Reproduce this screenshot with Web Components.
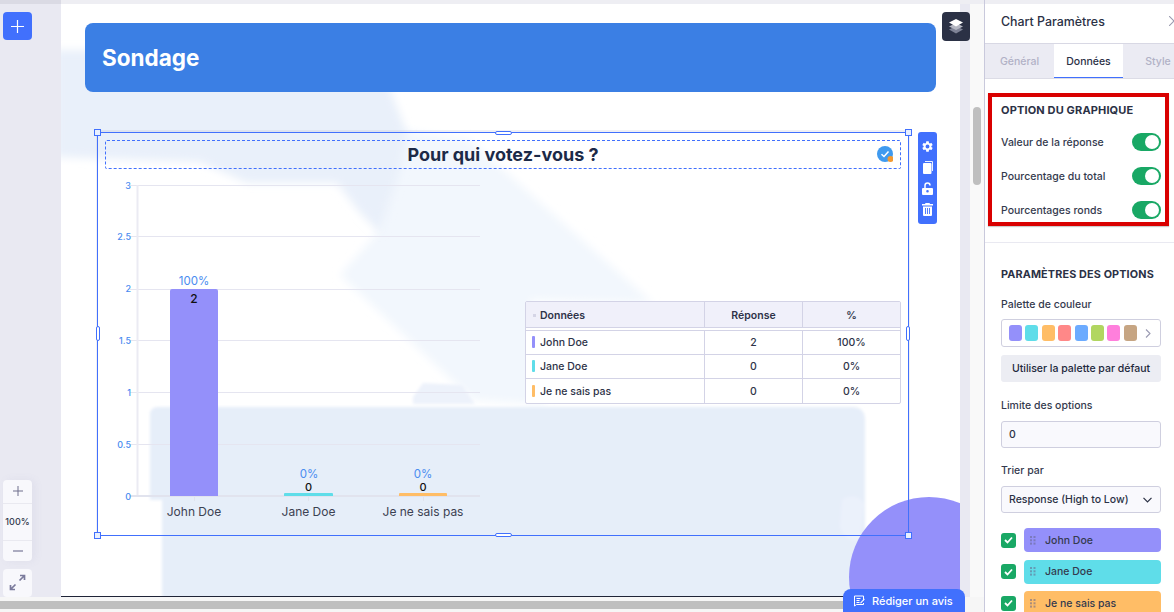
<!DOCTYPE html>
<html lang="fr">
<head>
<meta charset="utf-8">
<title>Sondage</title>
<style>
  html, body { margin: 0; padding: 0; width: 1174px; height: 612px; overflow: hidden; background: #fff; }
  body { font-family: "Inter", "Liberation Sans", sans-serif; color: #2d3348; }
</style>
</head>
<body>
<builder-app></builder-app>
<script>
const FONT = '"Inter", "Liberation Sans", sans-serif';
function define(name, html) {
  customElements.define(name, class extends HTMLElement {
    constructor() {
      super();
      const root = this.attachShadow({ mode: 'open' });
      if (typeof html !== 'function') {
        const tpl = document.createElement('template');
        tpl.innerHTML = html;
        root.appendChild(tpl.content.cloneNode(true));
      }
    }
    connectedCallback() {
      if (typeof html === 'function') {
        this.shadowRoot.innerHTML = html(this);
      }
    }
  });
}

define('tool-rail', `
<style>
  :host { display: flex; flex-direction: column; width: 61px; height: 597px; background: #e9e9f2; box-sizing: border-box; padding: 12px 0 0 3px; position: relative; flex: none; }
  .strip { position: absolute; left: 0; top: 0; right: 0; height: 4px; background: #dadae4; }
  .add { width: 29px; height: 29px; border-radius: 4px; background: #4170fd; display: flex; align-items: center; justify-content: center; }
  .zoom { margin-top: 439.500px; width: 29px; height: 83px; border-radius: 4px; background: #f8f8fc; display: flex; flex-direction: column; box-shadow: 3px 0 8px rgba(120,120,160,.08); }
  .zoom > div { display: flex; align-items: center; justify-content: center; }
  .z1 { height: 23px; border-bottom: 1px solid #e9e9f0; }
  .z2 { height: 36px; border-bottom: 1px solid #e9e9f0; font: 500 9px ${FONT}; color: #343a4e; }
  .z3 { flex: 1; }
  .expand { margin-top: 8px; width: 29px; height: 29px; border-radius: 4px; background: #f8f8fc; display: flex; align-items: center; justify-content: center; }
</style>
<div class="strip"></div>
<div class="add"><svg width="13" height="13" viewBox="0 0 13 13"><path d="M6.500 0v13M0 6.500h13" stroke="#fff" stroke-width="1.200"/></svg></div>
<div class="zoom">
  <div class="z1"><svg width="10" height="10" viewBox="0 0 10 10"><path d="M5 0v10M0 5h10" stroke="#6f6f8c" stroke-width="1"/></svg></div>
  <div class="z2">100%</div>
  <div class="z3"><svg width="10" height="2" viewBox="0 0 10 2"><path d="M0 1h10" stroke="#8a8aa6" stroke-width="1.400"/></svg></div>
</div>
<div class="expand"><svg width="17" height="17" viewBox="0 0 17 17" fill="none" stroke="#7a7a9c" stroke-width="1.700"><path d="M15.500 1.500 10.500 6.500M11 1.500h4.500V6M1.500 15.500l5-5M1.500 11v4.500H6"/></svg></div>
`);

define('page-backdrop', `
<style>
  :host { position: absolute; inset: 0; display: block; pointer-events: none; }
  svg { display: block; position: absolute; left: 0; top: 0; }
</style>
<svg width="899" height="593" viewBox="61 4 899 593">
  <defs>
    <filter id="b" x="-5%" y="-5%" width="110%" height="110%"><feGaussianBlur stdDeviation="1.600"/></filter>
    <filter id="s" x="-5%" y="-5%" width="110%" height="110%"><feGaussianBlur stdDeviation="4"/></filter>
  </defs>
  <polygon filter="url(#s)" fill="#f2f7fd" points="340,275 377,233 400,130 470,140 653,303 530,300 545,405 473,400"/>
  <polygon filter="url(#s)" fill="#e9f0fa" points="55,50 375,50 407,133 400,170 380,233 360,213 337,183 247,183 200,162 55,157"/>
  <g filter="url(#b)">
    <polygon fill="#edf2fb" points="413,397 423,383 462,385 475,404 413,404"/>
    <path fill="#e6eef9" d="M158 407H852Q865 407 865 420V530L850 540V600H162V500H150V415Q150 407 158 407Z"/>
    <path fill="#e6eef9" d="M840 530H960V600H840Z"/>
    <path fill="#fff" d="M868 476H960V530H868Z"/>
    <path fill="#eef3fb" d="M842 500c8 -6 18 -4 22 4l-4 36c-10 2-18-4-20-14z" opacity=".6"/>
  </g>
  <circle cx="929" cy="577" r="80" fill="#9490fa"/>
</svg>
`);

define('form-header', `
<style>
  :host { display: flex; align-items: center; box-sizing: border-box; margin-left: 24px; width: 851px; height: 69px; padding: 0 0 0 17px; background: #3b7fe4; border-radius: 8px; color: #fff; font: 700 22.500px ${FONT}; position: relative; }
</style>
<slot></slot>
`);

define('chart-plot', `
<style>
  :host { display: block; width: 427px; height: 365px; flex: none; align-self: flex-start; }
  svg { display: block; }
  text { font-family: ${FONT}; }
  .tick { font-size: 9px; fill: #4a8cf0; text-anchor: end; font-weight: 500; }
  .pct { font-size: 11.500px; fill: #4a8cf0; text-anchor: middle; }
  .val { font-size: 11px; fill: #111; text-anchor: middle; font-weight: 500; }
  .cat { font-size: 12px; fill: #3c4152; text-anchor: middle; }
  .grid { stroke: #e5e5f0; stroke-width: 1; }
</style>
<svg width="427" height="365" viewBox="98 169 427 365">
  <path class="grid" d="M130 185.500H480M130 236.500H480M130 289.500H480M130 340.500H480M130 392.500H480M130 444.500H480"/>
  <path d="M137.500 185V496" stroke="#ebebf3" stroke-width="2"/>
  <path d="M130 496H480" stroke="#e1e3ee" stroke-width="2"/>
  <path d="M194.500 497v4M308.500 497v4M423.500 497v4" stroke="#e1e3ee"/>
  <text class="tick" x="131" y="188.500">3</text>
  <text class="tick" x="131" y="240">2.5</text>
  <text class="tick" x="131" y="292">2</text>
  <text class="tick" x="131" y="344">1.5</text>
  <text class="tick" x="131" y="396">1</text>
  <text class="tick" x="131" y="448">0.5</text>
  <text class="tick" x="131" y="499.500">0</text>
  <path d="M170 496V291a2 2 0 0 1 2-2H216a2 2 0 0 1 2 2V496Z" fill="#9490fa"/>
  <path d="M284 496V494a1 1 0 0 1 1-1H332a1 1 0 0 1 1 1V496Z" fill="#5fdde9"/>
  <path d="M399 496V494a1 1 0 0 1 1-1H446a1 1 0 0 1 1 1V496Z" fill="#ffbd66"/>
  <text class="pct" x="194" y="285">100%</text>
  <text class="val" x="194" y="302.500" style="font-size:12px">2</text>
  <text class="pct" x="309" y="477.500">0%</text>
  <text class="val" x="308.500" y="491">0</text>
  <text class="pct" x="423" y="477.500">0%</text>
  <text class="val" x="423" y="491">0</text>
  <text class="cat" x="194" y="516">John Doe</text>
  <text class="cat" x="308.500" y="516">Jane Doe</text>
  <text class="cat" x="423" y="516">Je ne sais pas</text>
</svg>
`);

define('data-table', `
<style>
  :host { display: block; width: 376px; box-sizing: border-box; background: #fff; border: 1px solid #d3d3e6; border-radius: 2px; font: 500 10.500px ${FONT}; color: #2e3348; flex: none; margin-top: 1px; }
  .row { display: grid; grid-template-columns: 178px 98px 1fr; height: 24.500px; border-bottom: 1px solid #d3d3e6; box-sizing: border-box; }
  .row:last-child { border-bottom: 0; height: 24px; }
  .row > div { display: flex; align-items: center; justify-content: center; border-left: 1px solid #d3d3e6; }
  .row > div:first-child { justify-content: flex-start; border-left: 0; padding-left: 6px; }
  .head { height: 26px; background: #f0f0fa; font-weight: 600; margin-bottom: 2px; border-bottom: 1px solid #d3d3e6; box-shadow: 0 2px 0 #fff, 0 3px 0 #d3d3e6; }
  .head > div { padding-top: 1px; }
  .first > div { padding-top: 1px; }
  .bar { width: 3px; height: 12px; margin-right: 5px; border-radius: 1px; }
  .dot { width: 3px; height: 3px; margin: 0 4px 0 1px; background: #d5d5e6; }
</style>
<div class="row head"><div><span class="dot"></span>Données</div><div>Réponse</div><div>%</div></div>
<div class="row first"><div><span class="bar" style="background:#9490fa"></span>John Doe</div><div>2</div><div>100%</div></div>
<div class="row"><div><span class="bar" style="background:#5fdde9"></span>Jane Doe</div><div>0</div><div>0%</div></div>
<div class="row"><div><span class="bar" style="background:#ffbd66"></span>Je ne sais pas</div><div>0</div><div>0%</div></div>
`);

define('chart-widget', `
<style>
  :host { display: block; box-sizing: border-box; position: relative; margin: 40px 0 0 36px; width: 812px; height: 404px; border: 1px solid #4170fd; box-shadow: 0 -1px 0 1px rgba(150,150,175,.14); }
  .title { display: flex; align-items: center; justify-content: center; box-sizing: border-box; margin: 7px 7px 0; height: 29px; border: 1px dashed #4170fd; border-radius: 2px; font: 700 18px ${FONT}; color: #1c2a47; position: relative; }
  .badge { position: absolute; right: 7px; top: 5px; width: 16px; height: 16px; }
  .body { display: flex; align-items: center; height: 366px; box-sizing: border-box; }
  .h { position: absolute; box-sizing: border-box; background: #e8f0ff; border: 1px solid #4170fd; }
  .c { width: 7px; height: 7px; }
  .hh { width: 17px; height: 4px; left: 397px; border-radius: 2px; background: #fff; }
  .hv { width: 4px; height: 15px; top: 193px; border-radius: 2px; background: #fff; }
  .tools { position: absolute; left: 820px; top: -1px; width: 19px; height: 92px; background: #4170fd; border-radius: 3px; display: flex; flex-direction: column; align-items: center; padding-top: 7.500px; box-sizing: border-box; gap: 8px; }
  .tools svg { display: block; width: 13px; height: 13px; }
</style>
<div class="title">Pour qui votez-vous ?
  <svg class="badge" viewBox="0 0 16 16"><circle cx="8" cy="8" r="8" fill="#3f9aef"/><path d="M4.500 8.200 7 10.500 11.500 5.500" fill="none" stroke="#fff" stroke-width="1.500"/><circle cx="13.500" cy="13" r="3" fill="#f49a31"/></svg>
</div>
<div class="body"><chart-plot></chart-plot><data-table></data-table></div>
<span class="h c" style="left:-4px;top:-4px"></span>
<span class="h c" style="right:-4px;top:-4px"></span>
<span class="h c" style="left:-4px;bottom:-4px"></span>
<span class="h c" style="right:-4px;bottom:-4px"></span>
<span class="h hh" style="top:-2px"></span>
<span class="h hh" style="bottom:-2px"></span>
<span class="h hv" style="left:-2px"></span>
<span class="h hv" style="right:-2px"></span>
<div class="tools">
  <svg viewBox="0 0 24 24"><path fill="#fff" d="M19.140 12.940c.04-.3.06-.61.06-.94 0-.32-.02-.64-.07-.94l2.030-1.580a.49.49 0 0 0 .12-.61l-1.920-3.320a.488.488 0 0 0-.59-.22l-2.390.96c-.5-.38-1.030-.7-1.620-.94l-.36-2.540a.484.484 0 0 0-.48-.41h-3.840c-.24 0-.43.17-.47.41l-.36 2.540c-.59.24-1.130.57-1.620.94l-2.390-.96c-.22-.08-.47 0-.59.22L2.740 8.870c-.12.21-.08.47.12.61l2.030 1.580c-.05.3-.09.63-.09.94s.02.64.07.94l-2.030 1.580a.49.49 0 0 0-.12.61l1.920 3.320c.12.22.37.29.59.22l2.390-.96c.5.38 1.030.7 1.620.94l.36 2.540c.05.24.24.41.48.41h3.84c.24 0 .44-.17.47-.41l.36-2.540c.59-.24 1.130-.56 1.620-.94l2.390.96c.22.08.47 0 .59-.22l1.920-3.320c.12-.22.07-.47-.12-.61l-2.010-1.580zM12 15.600A3.600 3.600 0 1 1 12 8.400a3.600 3.600 0 0 1 0 7.200z"/></svg>
  <svg viewBox="0 0 13 13"><path fill="#fff" d="M4 0h7a1 1 0 0 1 1 1v9h-1V1H4z" opacity=".9"/><rect x="2" y="2" width="8.500" height="11" rx="1" fill="#fff"/></svg>
  <svg viewBox="0 0 13 13"><path fill="none" stroke="#fff" stroke-width="1.500" d="M4 6V3.500a2.500 2.500 0 0 1 5 0"/><path fill="#fff" fill-rule="evenodd" d="M2 6h9a1 1 0 0 1 1 1v5a1 1 0 0 1-1 1H2a1 1 0 0 1-1-1V7a1 1 0 0 1 1-1zm4.500 2a1.300 1.300 0 1 0 0 2.600 1.300 1.300 0 0 0 0-2.600z"/></svg>
  <svg viewBox="0 0 13 13"><path fill="#fff" d="M4.500 0h4l.5 1h3v1.500H1V1h3zM2 3.500h9V12a1 1 0 0 1-1 1H3a1 1 0 0 1-1-1z"/><path d="M4.500 5v6M6.500 5v6M8.500 5v6" stroke="#4170fd" stroke-width=".9"/></svg>
</div>
`);

define('form-page', `
<style>
  :host { display: block; position: relative; box-sizing: border-box; width: 899px; height: 593px; margin-top: 4px; flex: none; background: #fff; overflow: hidden; border-bottom: 1px solid #1f2437; padding-top: 19px; }
  .content { position: relative; }
</style>
<page-backdrop></page-backdrop>
<div class="content">
  <form-header>Sondage</form-header>
  <chart-widget></chart-widget>
</div>
`);

define('form-stage', `
<style>
  :host { display: flex; flex-direction: column; width: 984px; height: 612px; flex: none; position: relative; }
  .main { display: flex; height: 597px; background: #eeeef3; }
  .gutter { width: 10px; margin-top: 4px; background: #e9e9f2; flex: none; }
  .track { width: 14px; margin-top: 4px; background: #f9f9f9; flex: none; padding: 103px 3px 0; box-sizing: border-box; }
  .thumb { width: 8px; height: 78px; border-radius: 4px; background: #bfbfbf; }
  .hbar { flex: 1; background: #f6f6f6; padding-top: 4px; box-sizing: border-box; }
  .hthumb { width: 960px; height: 8px; background: #bfbfbf; }
  .layers { position: absolute; left: 942px; top: 12px; width: 28px; height: 29px; border-radius: 4px; background: #2b3145; display: flex; align-items: center; justify-content: center; }
  .review { position: absolute; left: 843px; bottom: 0; width: 122px; height: 23px; box-sizing: border-box; background: #4170fd; border-radius: 8px 8px 0 0; display: flex; align-items: center; padding-left: 11px; gap: 7px; color: #fff; font: 500 11px ${FONT}; }
</style>
<div class="main">
  <tool-rail></tool-rail>
  <form-page></form-page>
  <div class="gutter"></div>
  <div class="track"><div class="thumb"></div></div>
</div>
<div class="hbar"><div class="hthumb"></div></div>
<div class="layers"><svg width="14" height="15" viewBox="0 0 14 15"><path d="M7 7 14 10.500 7 14.500 0 10.500z" fill="#7f8396"/><path d="M7 4 14 7.500 7 11 0 7.500z" fill="#b4b6c2"/><path d="M7 0 14 3.500 7 7.500 0 3.500z" fill="#fff"/></svg></div>
<div class="review"><svg width="11" height="12" viewBox="0 0 11 12" fill="none" stroke="#fff" stroke-width="1"><path d="M9.500 5.500V1H.5v10l2-1.500h7V8M2.500 3.500h4M2.500 5.500h3M2.500 7.500h3"/><path d="M6 8 10 3.500l.8.8L7 8.600z" fill="#fff" stroke="none"/></svg>Rédiger un avis</div>
`);

define('panel-heading', `
<style>
  :host { display: block; font: 700 10.800px ${FONT}; color: #2b3145; line-height: 20px; letter-spacing: .15px; }
</style>
<slot></slot>
`);

define('field-label', `
<style>
  :host { display: block; font: 500 10.500px/16px ${FONT}; color: #343a4e; margin-top: 16px; }
</style>
<slot></slot>
`);

define('toggle-row', `
<style>
  :host { display: flex; align-items: center; justify-content: space-between; height: 18px; font: 500 10.500px ${FONT}; color: #343a4e; }
  .sw { width: 29px; height: 18px; border-radius: 9px; background: #19a865; position: relative; flex: none; }
  .sw::after { content: ""; position: absolute; right: 2px; top: 2px; width: 14px; height: 14px; border-radius: 50%; background: #fff; }
</style>
<slot></slot><span class="sw"></span>
`);

define('field-box', `
<style>
  :host { display: flex; align-items: center; justify-content: space-between; box-sizing: border-box; height: 27px; margin-top: 7px; padding: 0 8px 0 7px; border: 1px solid #cfcfdf; border-radius: 3px; background: #f9f9fd; font: 500 10.500px ${FONT}; color: #2b3145; }
</style>
<slot></slot>
`);

define('palette-picker', `
<style>
  :host { display: flex; align-items: center; box-sizing: border-box; height: 28px; margin-top: 6px; padding: 0 0 0 7px; border: 1px solid #cfcfdf; border-radius: 3px; background: #fff; gap: 3.400px; }
  i { display: block; width: 13px; height: 16px; border-radius: 3px; flex: none; }
  svg { margin-left: 5px; }
</style>
<i style="background:#9490fa"></i><i style="background:#5fdde9"></i><i style="background:#ffbd66"></i><i style="background:#ff8888"></i><i style="background:#6cabff"></i><i style="background:#b1d660"></i><i style="background:#ff7fdc"></i><i style="background:#c6a583"></i>
<svg width="6" height="9" viewBox="0 0 6 9" fill="none" stroke="#9a9ab2" stroke-width="1.100"><path d="M1 .5 5 4.500 1 8.500"/></svg>
`);

define('option-row', (el) => `
<style>
  :host { display: flex; align-items: center; height: 24px; gap: 8px; }
  .check { width: 15px; height: 15px; border-radius: 3px; background: #19a865; display: flex; align-items: center; justify-content: center; flex: none; }
  .bar { flex: 1; height: 100%; border-radius: 4px; display: flex; align-items: center; padding-left: 6px; gap: 9px; font: 500 10.500px ${FONT}; color: #343a4e; background: ${el.getAttribute('color')}; }
</style>
<span class="check"><svg width="9" height="8" viewBox="0 0 9 8" fill="none" stroke="#fff" stroke-width="1.800"><path d="M1 4 3.500 6.500 8 1.500"/></svg></span>
<div class="bar"><svg width="6" height="9" viewBox="0 0 6 9" fill="#66668a" fill-opacity=".55"><rect width="2" height="2"/><rect x="3.500" width="2" height="2"/><rect y="3.300" width="2" height="2"/><rect x="3.500" y="3.300" width="2" height="2"/><rect y="6.600" width="2" height="2"/><rect x="3.500" y="6.600" width="2" height="2"/></svg><slot></slot></div>
`);

define('settings-panel', `
<style>
  :host { display: flex; flex-direction: column; width: 190px; height: 612px; box-sizing: border-box; flex: none; background: #fff; border-left: 1px solid #c9c9dc; overflow: hidden; position: relative; }
  .strip { height: 4px; background: #eeeef3; flex: none; }
  .head { box-sizing: border-box; border-bottom: 1px solid #d8d8e4; display: flex; align-items: center; justify-content: space-between; padding: 0 0 5px 16px; font: 500 12.400px ${FONT}; color: #2b3145; flex: none; height: 40px; overflow: hidden; }
  .head svg { margin-right: -5px; }
  .tabs { display: flex; height: 35px; background: #ebebf3; border-bottom: 1px solid #dcdce6; box-sizing: border-box; font: 500 10.500px ${FONT}; color: #b1b1c6; flex: none; overflow: hidden; }
  .tabs > div { display: flex; align-items: center; justify-content: center; flex: none; }
  .t1 { width: 69px; }
  .t2 { width: 69px; background: #fff; color: #2b3145; box-shadow: inset 0 -1px 0 #4170fd; }
  .t3 { width: 70px; }
  .red { margin: 14px 0 0 3px; width: 181px; height: 133px; box-sizing: border-box; border: 4px solid #d90000; padding: 0 4px 0 9px; flex: none; display: flex; flex-direction: column; box-shadow: 0 1px 1px rgba(0,0,0,.2); }
  .red panel-heading { line-height: 26px; margin-bottom: 10px; font-size: 11px; }
  .rows { display: flex; flex-direction: column; gap: 16px; }
  .sec { margin-top: 16px; border-top: 1px solid #e9e9f1; padding: 22px 13px 0 16px; flex: none; }
  .btn { margin-top: 8px; height: 27px; border-radius: 3px; background: #ecedf3; display: flex; align-items: center; justify-content: center; font: 500 10.500px ${FONT}; color: #22283c; }
  .sec > field-label:first-of-type { margin-top: 12px; }
  .opts { margin-top: 15px; display: flex; flex-direction: column; gap: 7.500px; }
</style>
<div class="strip"></div>
<div class="head">Chart Paramètres<svg width="10" height="10" viewBox="0 0 10 10" fill="none" stroke="#9a9ab0" stroke-width="1.100"><path d="M0 0 10 10M10 0 0 10"/></svg></div>
<div class="tabs"><div class="t1">Général</div><div class="t2">Données</div><div class="t3">Style</div></div>
<div class="red">
  <panel-heading>OPTION DU GRAPHIQUE</panel-heading>
  <div class="rows">
    <toggle-row>Valeur de la réponse</toggle-row>
    <toggle-row>Pourcentage du total</toggle-row>
    <toggle-row>Pourcentages ronds</toggle-row>
  </div>
</div>
<div class="sec">
  <panel-heading>PARAMÈTRES DES OPTIONS</panel-heading>
  <field-label>Palette de couleur</field-label>
  <palette-picker></palette-picker>
  <div class="btn">Utiliser la palette par défaut</div>
  <field-label>Limite des options</field-label>
  <field-box>0</field-box>
  <field-label style="margin-top:15px">Trier par</field-label>
  <field-box>Response (High to Low)<svg width="9" height="6" viewBox="0 0 9 6" fill="none" stroke="#2b3145" stroke-width="1.200"><path d="M.5 .8 4.500 4.800 8.500 .8"/></svg></field-box>
  <div class="opts">
    <option-row color="#9490fa">John Doe</option-row>
    <option-row color="#5fdde9">Jane Doe</option-row>
    <option-row color="#ffbd66">Je ne sais pas</option-row>
  </div>
</div>
`);

define('builder-app', `
<style>
  :host { display: flex; width: 1174px; height: 612px; overflow: hidden; }
</style>
<form-stage></form-stage>
<settings-panel></settings-panel>
`);
</script>
</body>
</html>
